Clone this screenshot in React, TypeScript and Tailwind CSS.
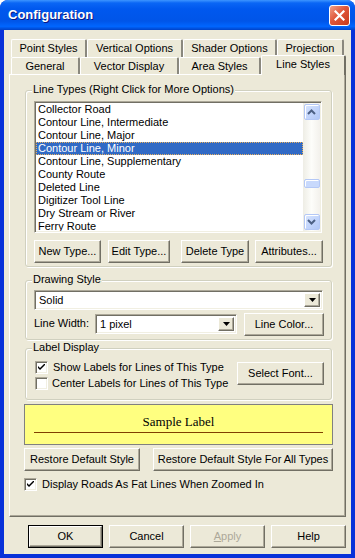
import React from 'react';

// classic 3D raised button
const raised =
    'bg-[#ECE9D8] border border-t-white border-l-white border-r-[#716F64] border-b-[#716F64] shadow-[inset_-1px_-1px_0_#ACA899]';
// sunken field (listbox, combo, checkbox)
const sunken =
    'border border-t-[#ACA899] border-l-[#ACA899] border-r-white border-b-white shadow-[inset_1px_1px_0_#716F64,inset_-1px_-1px_0_#F1EFE2]';

const lineTypes = [
    'Collector Road',
    'Contour Line, Intermediate',
    'Contour Line, Major',
    'Contour Line, Minor',
    'Contour Line, Supplementary',
    'County Route',
    'Deleted Line',
    'Digitizer Tool Line',
    'Dry Stream or River',
    'Ferry Route',
];

function Button({ label, className = '' }: { label: React.ReactNode; className?: string }) {
    return (
        <div className={`${raised} h-[23px] flex items-center justify-center text-[11px] leading-none text-black ${className}`}>
            {label}
        </div>
    );
}

function Tab({ label, w, selected = false }: { label: string; w: string; selected?: boolean }) {
    if (selected) {
        return (
            <div className={`${w} h-[20px] -mt-[2px] relative z-10 bg-[#ECE9D8] border-t border-l border-t-white border-l-white border-r-2 border-r-[#716F64] rounded-t-[2px] flex items-start justify-center pt-[2px] text-[11px] leading-[13px]`}>
                {label}
            </div>
        );
    }
    return (
        <div className={`${w} h-full bg-[#ECE9D8] border-t border-l border-t-white border-l-white border-r-2 border-r-[#8A887E] rounded-t-[2px] flex items-center justify-center text-[11px] leading-[13px]`}>
            {label}
        </div>
    );
}

function Group({ title, className = '', children }: { title: string; className?: string; children: React.ReactNode }) {
    return (
        <div className={`relative border border-[#D0D0BF] rounded-[3px] shadow-[inset_1px_1px_0_white,1px_1px_0_white] ${className}`}>
            <span className="absolute -top-[8px] left-[6px] px-[1px] bg-[#ECE9D8] text-[11px] leading-[13px] text-black">{title}</span>
            {children}
        </div>
    );
}

function DropArrow() {
    return (
        <div className={`${raised} w-[16px] h-full flex items-center justify-center`}>
            <svg width="7" height="4" viewBox="0 0 7 4">
                <polygon points="0,0 7,0 3.5,4" fill="black" />
            </svg>
        </div>
    );
}

function Combo({ value, className = '' }: { value: string; className?: string }) {
    return (
        <div className={`${sunken} bg-white h-[20px] flex items-stretch p-[2px] ${className}`}>
            <div className="flex-1 flex items-center pl-[2px] text-[11px] leading-none">{value}</div>
            <DropArrow />
        </div>
    );
}

function Check({ checked }: { checked: boolean }) {
    return (
        <div className={`${sunken} bg-white w-[13px] h-[13px] shrink-0 flex items-center justify-center`}>
            {checked && (
                <svg width="7" height="7" viewBox="0 0 7 7">
                    <path d="M0 2 L0 4 L2 6 L7 1 L7 -1 L2 4 Z" fill="black" />
                </svg>
            )}
        </div>
    );
}

function ScrollBtn({ up }: { up: boolean }) {
    return (
        <div className="w-[16px] h-[16px] mx-auto rounded-[2px] border border-[#B4C8F6] bg-[linear-gradient(135deg,#D9E5FD_0%,#C4D6FC_50%,#B2C8F7_100%)] shadow-[inset_1px_1px_0_white] flex items-center justify-center">
            <svg width="9" height="6" viewBox="0 0 9 6">
                {up ? (
                    <polyline points="1,5 4.5,1.5 8,5" fill="none" stroke="#4D6185" strokeWidth="2" />
                ) : (
                    <polyline points="1,1 4.5,4.5 8,1" fill="none" stroke="#4D6185" strokeWidth="2" />
                )}
            </svg>
        </div>
    );
}

function ListBox() {
    return (
        <div className={`${sunken} bg-white w-[288px] h-[132px] flex p-[1px]`}>
            <div className="flex-1 flex flex-col overflow-hidden pt-[0px]">
                {lineTypes.map((t, i) => (
                    <div
                        key={t}
                        className={`h-[13px] shrink-0 pl-[2px] text-[11px] leading-[13px] whitespace-nowrap ${i === 3 ? 'bg-[#316AC5] text-white outline-1 outline-dotted outline-[#E8B060] -outline-offset-1' : 'text-black'}`}
                    >
                        {t}
                    </div>
                ))}
            </div>
            <div className="w-[17px] flex flex-col py-[1px] bg-[linear-gradient(90deg,#EEEDE5_0%,#FDFDFA_50%,#F3F1EC_100%)]">
                <ScrollBtn up />
                <div className="flex-1 flex flex-col">
                    <div className="mt-[59px] h-[9px] w-[16px] mx-auto rounded-[2px] border border-[#B4C8F6] bg-[#C8D9FC] shadow-[inset_1px_1px_0_white]" />
                </div>
                <ScrollBtn up={false} />
            </div>
        </div>
    );
}

export default function App() {
    return (
        <div className="w-[355px] h-[558px] flex flex-col bg-[#0831D9] rounded-t-[8px] overflow-hidden font-['Liberation_Sans',Arial,sans-serif] text-black">
            {/* Title bar */}
            <div className="h-[30px] shrink-0 flex items-center pl-[8px] pr-[5px] bg-[linear-gradient(180deg,#3D95FF_0%,#0A66F5_10%,#0058EE_30%,#0055E8_70%,#0066FF_88%,#0042C8_100%)]">
                <span className="flex-1 text-white font-bold text-[13px] [text-shadow:1px_1px_#0A1883]">Configuration</span>
                <div className="w-[21px] h-[21px] rounded-[3px] border border-white bg-[linear-gradient(135deg,#F0A089_0%,#E0573A_45%,#C8391A_100%)] flex items-center justify-center">
                    <svg width="11" height="11" viewBox="0 0 11 11">
                        <path d="M1.5 1.5 L9.5 9.5 M9.5 1.5 L1.5 9.5" stroke="white" strokeWidth="2.2" strokeLinecap="square" />
                    </svg>
                </div>
            </div>

            {/* Body */}
            <div className="flex-1 mx-[4px] mb-[4px] bg-[#ECE9D8] flex flex-col">
                {/* Tabs */}
                <div className="mt-[9px] ml-[7px] flex flex-col">
                    <div className="h-[18px] flex">
                        <Tab label="Point Styles" w="w-[76px]" />
                        <Tab label="Vertical Options" w="w-[96px]" />
                        <Tab label="Shader Options" w="w-[94px]" />
                        <Tab label="Projection" w="w-[67px]" />
                    </div>
                    <div className="h-[17px] flex">
                        <Tab label="General" w="w-[69px]" />
                        <Tab label="Vector Display" w="w-[99px]" />
                        <Tab label="Area Styles" w="w-[82px]" />
                        <Tab label="Line Styles" w="w-[85px]" selected />
                    </div>
                </div>

                {/* Tab page */}
                <div className="ml-[5px] w-[337px] h-[443px] border border-t-white border-l-white border-r-[#716F64] border-b-[#716F64] shadow-[inset_-1px_-1px_0_#ACA899] flex flex-col">
                    <Group title="Line Types (Right Click for More Options)" className="ml-[15px] mt-[15px] w-[307px] pt-[10px] pl-[8px] pb-[3px]">
                        <ListBox />
                        <div className="mt-[7px] flex">
                            <Button label="New Type..." className="w-[67px]" />
                            <Button label="Edit Type..." className="ml-[7px] w-[62px]" />
                            <Button label="Delete Type" className="ml-[11px] w-[68px]" />
                            <Button label="Attributes..." className="ml-[6px] w-[68px]" />
                        </div>
                    </Group>

                    <Group title="Drawing Style" className="ml-[15px] mt-[13px] w-[307px] pt-[9px] pl-[8px] pb-[3px]">
                        <Combo value="Solid" className="w-[289px]" />
                        <div className="mt-[3px] h-[23px] flex items-start">
                            <span className="mt-[4px] w-[61px] text-[11px] leading-[13px]">Line Width:</span>
                            <Combo value="1 pixel" className="mt-[1px] w-[142px]" />
                            <Button label="Line Color..." className="ml-[7px] w-[80px]" />
                        </div>
                    </Group>

                    <Group title="Label Display" className="ml-[15px] mt-[8px] w-[307px] pt-[10px] pl-[9px] pb-[8px]">
                        <div className="flex">
                            <div className="flex flex-col">
                                <div className="h-[16px] flex items-center gap-[5px] text-[11px] leading-none">
                                    <Check checked />
                                    <span>Show Labels for Lines of This Type</span>
                                </div>
                                <div className="h-[16px] flex items-center gap-[4px] text-[11px] leading-none">
                                    <Check checked={false} />
                                    <span>Center Labels for Lines of This Type</span>
                                </div>
                            </div>
                            <div className="flex-1" />
                            <Button label="Select Font..." className="mt-[3px] mr-[7px] w-[87px]" />
                        </div>
                    </Group>

                    {/* Sample */}
                    <div className="ml-[14px] mt-[4px] w-[309px] h-[41px] bg-[#FFFF80] border border-[#808080] flex flex-col pt-[9px]">
                        <div className="text-center font-['Liberation_Serif','Times_New_Roman',serif] text-[13px] leading-[15px]">Sample Label</div>
                        <div className="mt-[3px] mx-[9px] h-px bg-[#804000]" />
                    </div>

                    <div className="ml-[14px] mt-[3px] flex">
                        <Button label="Restore Default Style" className="w-[116px]" />
                        <Button label="Restore Default Style For All Types" className="ml-[13px] w-[180px]" />
                    </div>

                    <div className="ml-[14px] mt-[7px] h-[13px] flex items-center gap-[5px] text-[11px] leading-none">
                        <Check checked />
                        <span>Display Roads As Fat Lines When Zoomed In</span>
                    </div>
                </div>

                {/* Dialog buttons */}
                <div className="mt-[8px] ml-[24px] flex gap-[6px]">
                    <div className="w-[75px] h-[23px] border border-black">
                        <Button label="OK" className="h-full" />
                    </div>
                    <Button label="Cancel" className="w-[75px]" />
                    <Button label={<span className="text-[#ACA899]"><span className="underline">A</span>pply</span>} className="w-[75px]" />
                    <Button label="Help" className="w-[75px]" />
                </div>
            </div>
        </div>
    );
}
